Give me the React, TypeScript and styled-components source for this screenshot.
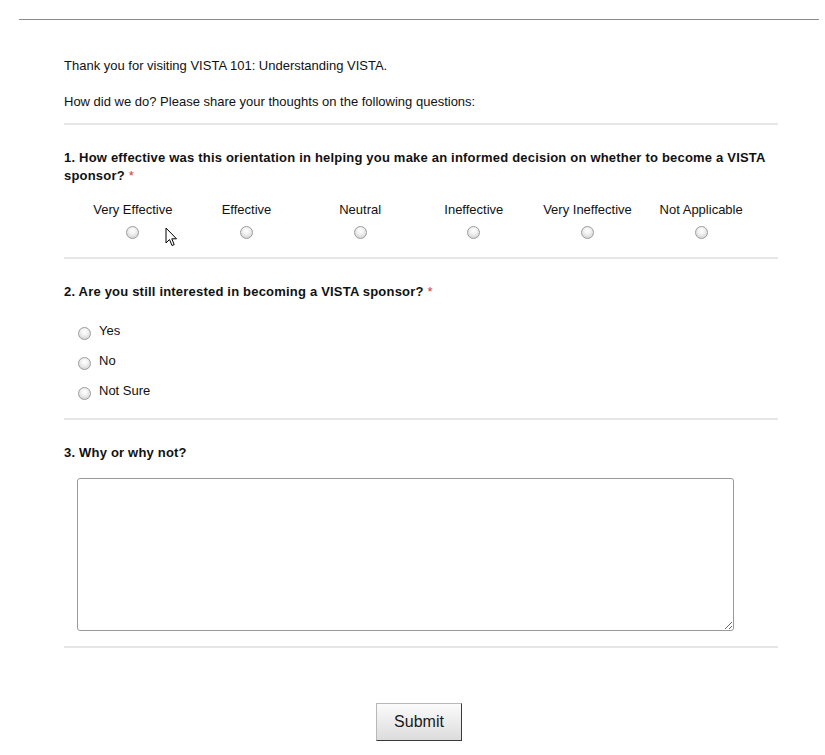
import React from "react";
import styled, { createGlobalStyle } from "styled-components";

const Global = createGlobalStyle`
  html, body { margin: 0; padding: 0; background: #fff; }
  body { font-family: "Liberation Sans", Arial, sans-serif; color: #111; }
`;

const Page = styled.div`
  position: relative;
  padding-top: 19px;
  width: 825px;
`;

const TopRule = styled.div`
  margin-left: 19px;
  width: 800px;
  border-top: 1px solid #8a8a8a;
`;

const Form = styled.form`
  margin-left: 64px;
  width: 714px;
  padding-top: 37px;
`;

const Intro = styled.p`
  margin: 0;
  font-size: 13px;
  line-height: 18px;
  & + & { margin-top: 18px; }
`;

const Divider = styled.div<{ $gap: number }>`
  height: 2px;
  background: #e6e6e6;
  margin-top: ${(p) => p.$gap}px;
`;

const Section = styled.div`
  padding-top: 24px;
`;

const Title = styled.div`
  font-size: 13px;
  line-height: 18px;
  font-weight: bold;
  letter-spacing: 0.2px;
`;

const Req = styled.span`
  color: #d03a3a;
  font-weight: normal;
  letter-spacing: 0;
`;

const ScaleGrid = styled.div`
  display: grid;
  grid-template-columns: repeat(6, 1fr);
  margin-left: 12px;
  width: 682px;
  margin-top: 16px;
`;

const ScaleCol = styled.label`
  display: flex;
  flex-direction: column;
  align-items: center;
  gap: 7px;
  font-size: 13px;
  line-height: 18px;
`;

const Radio = styled.input.attrs({ type: "radio" })`
  appearance: none;
  -webkit-appearance: none;
  margin: 0;
  width: 13px;
  height: 13px;
  border-radius: 50%;
  border: 1px solid #9c9c9c;
  background: radial-gradient(circle at 50% 35%, #ffffff 0%, #f2f2f2 35%, #c9c9c9 100%);
  box-sizing: border-box;
  flex: none;
`;

const OptionList = styled.div`
  margin-top: 21px;
  display: flex;
  flex-direction: column;
  gap: 12px;
  padding-left: 14px;
`;

const Option = styled.label`
  display: flex;
  align-items: center;
  gap: 8px;
  font-size: 13px;
  line-height: 18px;
  & > input { margin-top: 4px; }
`;

const TextArea = styled.textarea`
  display: block;
  margin: 16px 0 0 13px;
  width: 657px;
  height: 153px;
  box-sizing: border-box;
  border: 1px solid #9a9a9a;
  border-radius: 3px;
  font-family: "Liberation Sans", Arial, sans-serif;
  font-size: 13px;
  resize: both;
`;

const ButtonRow = styled.div`
  margin-left: 19px;
  width: 800px;
  display: flex;
  justify-content: center;
  padding-top: 55px;
`;

const SubmitButton = styled.button`
  width: 86px;
  height: 38px;
  box-sizing: border-box;
  font-family: "Liberation Sans", Arial, sans-serif;
  font-size: 16px;
  color: #1a1a1a;
  background: linear-gradient(#fbfbfb, #dcdcdc);
  border: 1px solid;
  border-color: #b8b8b8 #3a3a3a #3a3a3a #b8b8b8;
  border-radius: 0;
  padding: 0;
`;

const Cursor = styled.svg`
  position: absolute;
  left: 165px;
  top: 227px;
`;

const scale = ["Very Effective", "Effective", "Neutral", "Ineffective", "Very Ineffective", "Not Applicable"];
const yesNo = ["Yes", "No", "Not Sure"];

export default function App() {
  return (
    <Page>
      <Global />
      <TopRule />
      <Form onSubmit={(e) => e.preventDefault()}>
        <Intro>Thank you for visiting VISTA 101: Understanding VISTA.</Intro>
        <Intro>How did we do? Please share your thoughts on the following questions:</Intro>
        <Divider $gap={12} />
        <Section>
          <Title>
            1. How effective was this orientation in helping you make an informed decision on whether to become a VISTA sponsor? <Req>*</Req>
          </Title>
          <ScaleGrid>
            {scale.map((s) => (
              <ScaleCol key={s}>
                {s}
                <Radio name="q1" />
              </ScaleCol>
            ))}
          </ScaleGrid>
        </Section>
        <Divider $gap={18} />
        <Section>
          <Title>
            2. Are you still interested in becoming a VISTA sponsor? <Req>*</Req>
          </Title>
          <OptionList>
            {yesNo.map((s) => (
              <Option key={s}>
                <Radio name="q2" />
                {s}
              </Option>
            ))}
          </OptionList>
        </Section>
        <Divider $gap={18} />
        <Section>
          <Title>3. Why or why not?</Title>
          <TextArea />
        </Section>
        <Divider $gap={15} />
      </Form>
      <ButtonRow>
        <SubmitButton type="submit">Submit</SubmitButton>
      </ButtonRow>
      <Cursor width="13" height="20" viewBox="0 0 13 20">
        <path d="M1 1 L1 16 L4.5 12.5 L7 18.5 L9.2 17.6 L6.8 11.8 L11.5 11.8 Z" fill="#fff" stroke="#000" strokeWidth="1" strokeLinejoin="miter" />
      </Cursor>
    </Page>
  );
}
